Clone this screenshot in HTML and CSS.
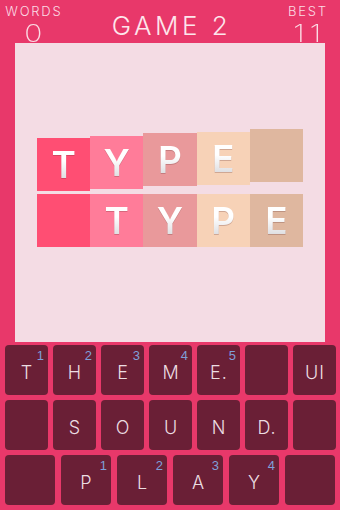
FILE: index.html
```html
<!DOCTYPE html>
<html>
<head>
<meta charset="utf-8">
<link rel="stylesheet" href="styles.css">
</head>
<body>
<div class="screen">
  <header class="top">
    <div class="stat">
      <div class="stat-label">WORDS</div>
      <div class="stat-value">0</div>
    </div>
    <div class="title">GAME 2</div>
    <div class="stat">
      <div class="stat-label">BEST</div>
      <div class="stat-value">11</div>
    </div>
  </header>

  <main class="board">
    <div class="tile-row stagger">
      <div class="tile c1"><span>T</span></div>
      <div class="tile c2"><span>Y</span></div>
      <div class="tile c3"><span>P</span></div>
      <div class="tile c4"><span>E</span></div>
      <div class="tile c5"></div>
    </div>
    <div class="tile-row second">
      <div class="tile c1"></div>
      <div class="tile c2"><span>T</span></div>
      <div class="tile c3"><span>Y</span></div>
      <div class="tile c4"><span>P</span></div>
      <div class="tile c5"><span>E</span></div>
    </div>
  </main>

  <section class="keyboard">
    <div class="key-row seven">
      <div class="key"><span class="letter">T</span><span class="num">1</span></div>
      <div class="key"><span class="letter">H</span><span class="num">2</span></div>
      <div class="key"><span class="letter">E</span><span class="num">3</span></div>
      <div class="key"><span class="letter">M</span><span class="num">4</span></div>
      <div class="key"><span class="letter">E.</span><span class="num">5</span></div>
      <div class="key"></div>
      <div class="key"><span class="letter">UI</span></div>
    </div>
    <div class="key-row seven">
      <div class="key"></div>
      <div class="key"><span class="letter">S</span></div>
      <div class="key"><span class="letter">O</span></div>
      <div class="key"><span class="letter">U</span></div>
      <div class="key"><span class="letter">N</span></div>
      <div class="key"><span class="letter">D.</span></div>
      <div class="key"></div>
    </div>
    <div class="key-row six">
      <div class="key"></div>
      <div class="key"><span class="letter">P</span><span class="num">1</span></div>
      <div class="key"><span class="letter">L</span><span class="num">2</span></div>
      <div class="key"><span class="letter">A</span><span class="num">3</span></div>
      <div class="key"><span class="letter">Y</span><span class="num">4</span></div>
      <div class="key"></div>
    </div>
  </section>
</div>
</body>
</html>
```

FILE: styles.css
```css
* { box-sizing: border-box; }

html, body {
  margin: 0;
  padding: 0;
  background: #e8386a;
}

.screen {
  width: 340px;
  height: 510px;
  background: #e8386a;
  font-family: Inter, "Liberation Sans", sans-serif;
  overflow: hidden;
}

.top {
  height: 43px;
  display: grid;
  grid-template-columns: 66px 1fr 66px;
  color: #fbdbe4;
}

.stat {
  display: flex;
  flex-direction: column;
  align-items: center;
  padding-top: 4px;
}

.stat-label {
  font-size: 13px;
  line-height: 14px;
  font-weight: 300;
  letter-spacing: 1.8px;
  padding-left: 1.8px;
}

.stat-value {
  font-size: 24px;
  line-height: 24px;
  font-weight: 200;
  margin-top: 3.5px;
  letter-spacing: 4px;
  padding-left: 4px;
  transform: scaleX(1.25);
}

.title {
  text-align: center;
  font-size: 26px;
  line-height: 30px;
  font-weight: 300;
  letter-spacing: 3.5px;
  padding-top: 11px;
  padding-left: 3px;
  color: #fde6ec;
}

.board {
  margin: 0 15px;
  height: 299px;
  background: #f4dce4;
  padding: 86px 0 0 22px;
}

.tile-row {
  display: flex;
  align-items: flex-start;
}

.tile-row.second {
  margin-top: 3px;
}

.tile {
  width: 53.2px;
  height: 53px;
  display: flex;
  align-items: center;
  justify-content: center;
}

.stagger .tile:nth-child(1) { margin-top: 9px; }
.stagger .tile:nth-child(2) { margin-top: 7px; }
.stagger .tile:nth-child(3) { margin-top: 4px; }
.stagger .tile:nth-child(4) { margin-top: 3px; }
.stagger .tile:nth-child(5) { margin-top: 0; }

.c1 { background: #ff4e73; }
.c2 { background: #ff7c99; }
.c3 { background: #e9999b; }
.c4 { background: #f7d2b7; }
.c5 { background: #dfb79f; }

.tile span {
  font-family: Inter, "Liberation Sans", sans-serif;
  font-size: 37px;
  font-weight: 600;
  line-height: 1;
  background: linear-gradient(#ffffff 40%, #d6d6da);
  -webkit-background-clip: text;
  background-clip: text;
  color: transparent;
  filter: drop-shadow(0 1px 0.6px rgba(90, 40, 40, 0.25));
}

.keyboard {
  padding: 3px 4px 0 5px;
  display: flex;
  flex-direction: column;
  gap: 5px;
}

.key-row {
  display: grid;
  height: 50px;
}

.key-row.seven {
  grid-template-columns: repeat(7, 1fr);
  column-gap: 5px;
}

.key-row.six {
  grid-template-columns: repeat(6, 1fr);
  column-gap: 6px;
  margin-right: 1px;
}

.key {
  position: relative;
  background: #6a1f36;
  border-radius: 4px;
  display: flex;
  align-items: center;
  justify-content: center;
  padding-top: 4px;
}

.letter {
  font-family: Inter, "Liberation Sans", sans-serif;
  font-size: 18px;
  font-weight: 300;
  color: #ecdde2;
  letter-spacing: 1px;
  padding-left: 1px;
}

.num {
  position: absolute;
  top: 3px;
  right: 4px;
  font-family: "Liberation Sans", Arial, sans-serif;
  font-size: 13px;
  color: #7f9fd9;
}
```
